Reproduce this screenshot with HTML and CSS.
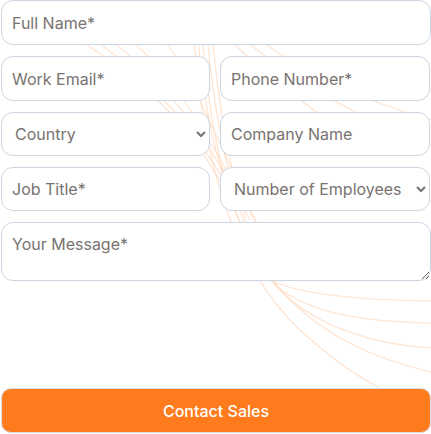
FILE: index.html
```html
<!DOCTYPE html>
<html lang="en">
<head>
<meta charset="utf-8">
<title>Contact Sales</title>
<link rel="stylesheet" href="styles.css">
</head>
<body>
<div class="page">
  <svg class="bg-lines" width="431" height="434" viewBox="0 0 431 434" aria-hidden="true">
    <g fill="none" stroke="#fdd8bd" stroke-width="1.2" stroke-opacity="0.7">
      <path d="M196 0 C200 120 230 240 290 300 C330 340 380 360 431 372"/>
      <path d="M200 0 C205 110 225 230 280 290 C320 330 380 345 431 348"/>
      <path d="M205 0 C210 100 230 220 275 285 C310 315 370 322 431 323"/>
      <path d="M210 0 C215 100 235 215 270 280 C300 295 360 300 431 301"/>
      <path d="M192 0 C196 130 225 260 300 330 C335 362 360 378 380 388"/>
      <path d="M80 40 C140 80 190 120 230 200"/>
      <path d="M95 40 C150 80 200 130 240 210"/>
      <path d="M110 40 C165 80 210 140 250 220"/>
      <path d="M130 40 C180 80 215 150 260 230"/>
      <path d="M165 40 C200 90 230 170 265 240"/>
      <path d="M230 40 C260 70 300 100 340 130"/>
      <path d="M245 40 C280 70 330 100 380 125"/>
      <path d="M260 40 C300 70 360 100 431 120"/>
    </g>
  </svg>
  <form class="form">
    <input class="field" type="text" placeholder="Full Name*">
    <div class="row">
      <input class="field" type="email" placeholder="Work Email*">
      <input class="field" type="tel" placeholder="Phone Number*">
    </div>
    <div class="row row-sm">
      <select class="field select">
        <option>Country</option>
      </select>
      <input class="field" type="text" placeholder="Company Name">
    </div>
    <div class="row row-sm">
      <input class="field" type="text" placeholder="Job Title*">
      <select class="field select">
        <option>Number of Employees</option>
      </select>
    </div>
    <textarea class="field message" placeholder="Your Message*"></textarea>
    <button class="submit" type="button">Contact Sales</button>
  </form>
</div>
</body>
</html>
```
FILE: styles.css
```css
* { box-sizing: border-box; }
html, body {
  margin: 0;
  padding: 0;
  background: #ffffff;
}
body {
  font-family: Inter, "Noto Sans", sans-serif;
  width: 431px;
  height: 434px;
  overflow: hidden;
}
.page {
  position: relative;
  width: 431px;
  height: 434px;
}
.bg-lines {
  position: absolute;
  left: 0;
  top: 0;
  z-index: 0;
}
.form {
  position: relative;
  z-index: 1;
  display: flex;
  flex-direction: column;
  gap: 11px;
  padding: 0 0 0 1px;
  width: 431px;
}
.row {
  display: grid;
  grid-template-columns: 209px 210px;
  column-gap: 10px;
}
.field {
  display: block;
  width: 100%;
  height: 45px;
  margin: 0;
  border: 1px solid #cbd5e1;
  border-radius: 12px;
  background: #ffffff;
  font-family: Inter, "Noto Sans", sans-serif;
  font-size: 16px;
  color: #78736f;
  padding: 0 10px;
  outline: none;
}
.row-sm .field { height: 44px; }
.field::placeholder { color: #78736f; opacity: 1; }
.select {
  padding: 0 4px 0 9px;
}
.message {
  height: 59px;
  padding: 11px 10px;
  resize: vertical;
}
.submit {
  margin-top: 96px;
  height: 45px;
  width: 100%;
  border: 1px solid #d8dde6;
  border-radius: 10px;
  background: #ff7b1d;
  color: #ffffff;
  font-family: Inter, "Noto Sans", sans-serif;
  font-size: 16px;
  font-weight: 500;
  cursor: pointer;
}
```
